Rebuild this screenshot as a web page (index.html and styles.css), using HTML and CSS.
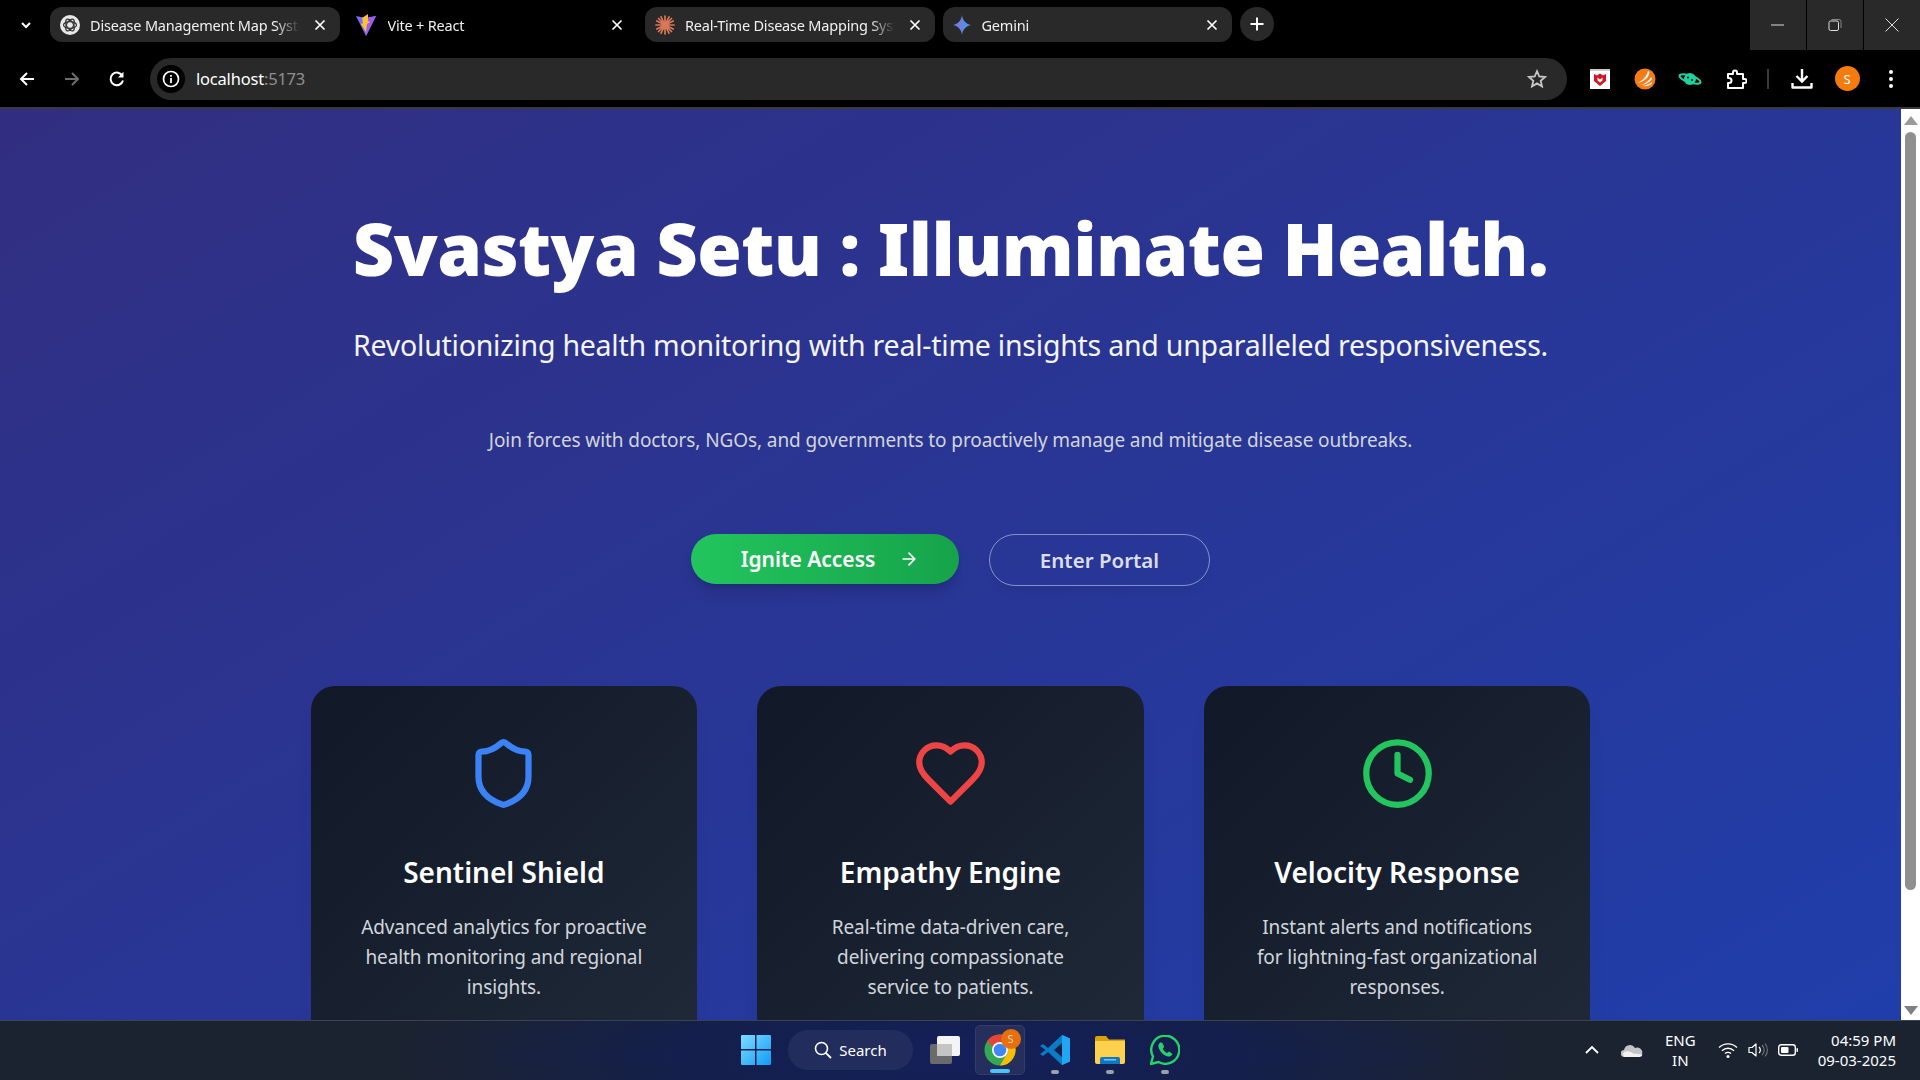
FILE: index.html
```html
<!DOCTYPE html>
<html lang="en">
<head>
<meta charset="utf-8">
<title>Svastya Setu</title>
<link rel="stylesheet" href="styles.css">
</head>
<body>
<header class="chrome">
  <div class="tabstrip">
    <div class="tabs">
      <span class="tab-menu"><svg width="14" height="14" viewBox="0 0 14 14"><path d="M3 5l4 4 4-4" fill="none" stroke="#fff" stroke-width="2"/></svg></span>
      <div class="tab tab-on">
        <svg class="fav" width="20" height="20" viewBox="0 0 20 20"><circle cx="10" cy="10" r="10" fill="#e8e8e8"/><g fill="none" stroke="#333" stroke-width="1.2"><ellipse cx="10" cy="10" rx="6.5" ry="3.4"/><ellipse cx="10" cy="10" rx="6.5" ry="3.4" transform="rotate(60 10 10)"/><ellipse cx="10" cy="10" rx="6.5" ry="3.4" transform="rotate(120 10 10)"/></g></svg>
        <span class="tab-title">Disease Management Map System</span>
        <svg class="tab-x" width="12" height="12" viewBox="0 0 12 12"><path d="M1.5 1.5l9 9M10.5 1.5l-9 9" stroke="#fff" stroke-width="1.7"/></svg>
      </div>
      <div class="tab">
        <svg class="fav fav-vite" width="20" height="22" viewBox="0 0 20 22"><path d="M0 2l10 2 10-2-10 20z" fill="#7b6cf5"/><path d="M10 4l10-2-10 20z" fill="#a35cf0"/><path d="M12 0L6 4l1 5-2 1 5 8 1-8 3-2-2-1z" fill="#fdc22c"/></svg>
        <span class="tab-title">Vite + React</span>
        <svg class="tab-x" width="12" height="12" viewBox="0 0 12 12"><path d="M1.5 1.5l9 9M10.5 1.5l-9 9" stroke="#fff" stroke-width="1.7"/></svg>
      </div>
      <div class="tab tab-on">
        <svg class="fav" width="20" height="20" viewBox="0 0 20 20"><g stroke="#d97757" stroke-width="1.7" stroke-linecap="round"><path d="M10 1v18M1 10h18M3.5 3.5l13 13M16.500 3.500l-13 13M6 1.800l8 16.400M14 1.800L6 18.200M1.800 6l16.400 8M18.200 6L1.800 14"/></g><circle cx="10" cy="10" r="3.500" fill="#d97757"/></svg>
        <span class="tab-title">Real-Time Disease Mapping System</span>
        <svg class="tab-x" width="12" height="12" viewBox="0 0 12 12"><path d="M1.5 1.5l9 9M10.5 1.5l-9 9" stroke="#fff" stroke-width="1.7"/></svg>
      </div>
      <div class="tab tab-on">
        <svg class="fav fav-gem" width="18" height="20" viewBox="0 0 18 20"><defs><linearGradient id="gem" x1="0" x2="1" y1="0.500" y2="0.500"><stop offset="0" stop-color="#8a6fd8"/><stop offset="1" stop-color="#3f9bf0"/></linearGradient></defs><path d="M9 0c.7 5.300 3.700 9 9 10-5.300 1-8.300 4.700-9 10-.7-5.300-3.700-9-9-10 5.300-1 8.300-4.700 9-10z" fill="url(#gem)"/></svg>
        <span class="tab-title">Gemini</span>
        <svg class="tab-x" width="12" height="12" viewBox="0 0 12 12"><path d="M1.5 1.5l9 9M10.5 1.5l-9 9" stroke="#fff" stroke-width="1.7"/></svg>
      </div>
      <span class="tab-new"><svg width="16" height="16" viewBox="0 0 16 16"><path d="M8 1.500v13M1.500 8h13" stroke="#fff" stroke-width="2"/></svg></span>
    </div>
    <div class="winbtns">
      <span class="winbtn"><svg width="14" height="14" viewBox="0 0 14 14"><path d="M0 7h13" stroke="#ddd" stroke-width="1"/></svg></span>
      <span class="winbtn"><svg width="14" height="14" viewBox="0 0 14 14"><rect x="1" y="3" width="9.500" height="9.500" rx="1.500" fill="none" stroke="#ddd"/><path d="M3.500 1.500h7.500a2 2 0 0 1 2 2V10" fill="none" stroke="#888"/></svg></span>
      <span class="winbtn"><svg width="14" height="14" viewBox="0 0 14 14"><path d="M.5.500l13 13M13.500.500l-13 13" stroke="#ddd"/></svg></span>
    </div>
  </div>
  <div class="toolbar">
    <div class="navs">
      <svg width="18" height="18" viewBox="0 0 18 18"><path d="M16 9H3M9 3L3 9l6 6" fill="none" stroke="#fff" stroke-width="2"/></svg>
      <svg width="18" height="18" viewBox="0 0 18 18"><path d="M2 9h13M9 3l6 6-6 6" fill="none" stroke="#6e6e6e" stroke-width="2"/></svg>
      <svg width="18" height="18" viewBox="0 0 18 18"><path d="M14.500 6A6.300 6.300 0 1 0 15 10.500" fill="none" stroke="#fff" stroke-width="2"/><path d="M15.500 1.800v5.700H10z" fill="#fff"/></svg>
    </div>
    <div class="omnibox">
      <span class="site-info"><svg width="18" height="18" viewBox="0 0 18 18"><circle cx="9" cy="9" r="7.500" fill="none" stroke="#fff" stroke-width="1.700"/><path d="M9 8v5M9 5v1.800" stroke="#fff" stroke-width="1.800"/></svg></span>
      <span class="url">localhost<span class="url-port">:5173</span></span>
      <svg class="star" width="20" height="20" viewBox="0 0 20 20"><path d="M10 2.200l2.300 5.300 5.700.5-4.300 3.800 1.300 5.600L10 14.400l-5 3 1.300-5.600L2 8l5.700-.5z" fill="none" stroke="#c8c8c8" stroke-width="1.800"/></svg>
    </div>
    <div class="exts">
      <svg width="22" height="22" viewBox="0 0 22 22"><rect x="1" y="1" width="20" height="20" fill="#fff"/><rect x="1" y="1" width="20" height="2" fill="#ccc"/><path d="M5 6l3 1.500L11 5.500l3 2 3-1.500v7l-6 5-6-5zM8.500 9.500v3l2.500 2 2.500-2v-3L11 11.500z" fill="#d0142c"/></svg>
      <svg width="22" height="22" viewBox="0 0 22 22"><circle cx="11" cy="11" r="10.500" fill="#f47b16"/><path d="M4 15C9 12 13 8 14 3l1.500 1C15 9 11 13 4 15zM6 17c5-1 9-4 11-8l1 2c-2 3-7 6-12 6zM9 18c3-.5 6-2 9-4l-.5 2c-2 1.500-5 2.500-8.500 2z" fill="#fff"/></svg>
      <svg width="24" height="22" viewBox="0 0 24 22"><ellipse cx="12" cy="11" rx="11" ry="3.500" transform="rotate(18 12 11)" fill="none" stroke="#1fd3a0" stroke-width="2"/><circle cx="12" cy="11" r="6" fill="#1fd3a0"/><circle cx="10" cy="9.500" r="1" fill="#000"/><circle cx="14" cy="12" r="1" fill="#000"/></svg>
      <svg width="22" height="22" viewBox="0 0 22 22"><path d="M3 6h5V4.500a2 2 0 0 1 4 0V6h6v5h1.500a2 2 0 0 1 0 4H18v5H3v-5h1a2.500 2.500 0 0 0 0-5H3z" fill="none" stroke="#fff" stroke-width="2" stroke-linejoin="round"/></svg>
    </div>
    <span class="sep"></span>
    <div class="exts-end">
      <svg width="22" height="22" viewBox="0 0 22 22"><path d="M11 1v12M5.500 8l5.500 5.500L16.500 8" fill="none" stroke="#fff" stroke-width="2.400"/><path d="M1.500 15v4.500h19V15" fill="none" stroke="#fff" stroke-width="2.400" stroke-linejoin="round"/></svg>
      <span class="avatar">S</span>
      <svg class="kebab" width="6" height="20" viewBox="0 0 6 20"><circle cx="3" cy="3" r="2" fill="#fff"/><circle cx="3" cy="10" r="2" fill="#fff"/><circle cx="3" cy="17" r="2" fill="#fff"/></svg>
    </div>
  </div>
</header>

<div class="viewport">
  <main class="page">
    <section class="hero">
      <h1 class="hero-title">Svastya Setu : Illuminate Health.</h1>
      <p class="hero-sub">Revolutionizing health monitoring with real-time insights and unparalleled responsiveness.</p>
      <p class="hero-note">Join forces with doctors, NGOs, and governments to proactively manage and mitigate disease outbreaks.</p>
      <div class="cta">
        <a class="btn btn-primary">Ignite Access
          <svg width="20" height="20" viewBox="0 0 24 24" fill="none" stroke="currentColor" stroke-width="2" stroke-linecap="round" stroke-linejoin="round"><path d="M5 12h14M12 5l7 7-7 7"/></svg>
        </a>
        <a class="btn btn-ghost">Enter Portal</a>
      </div>
    </section>
    <section class="cards">
      <article class="card">
        <svg class="card-icon" viewBox="0 0 24 24" fill="none" stroke="#3b82f6" stroke-width="2" stroke-linecap="round" stroke-linejoin="round"><path d="M20 13c0 5-3.500 7.500-7.660 8.950a1 1 0 0 1-.67-.01C7.500 20.500 4 18 4 13V6a1 1 0 0 1 1-1c2 0 4.500-1.200 6.240-2.720a1.170 1.170 0 0 1 1.520 0C14.510 3.810 17 5 19 5a1 1 0 0 1 1 1z"/></svg>
        <h3 class="card-title">Sentinel Shield</h3>
        <p class="card-text">Advanced analytics for proactive health monitoring and regional insights.</p>
      </article>
      <article class="card">
        <svg class="card-icon" viewBox="0 0 24 24" fill="none" stroke="#ef4444" stroke-width="2" stroke-linecap="round" stroke-linejoin="round"><path d="M19 14c1.490-1.460 3-3.210 3-5.500A5.500 5.500 0 0 0 16.500 3c-1.760 0-3 .5-4.500 2-1.500-1.500-2.740-2-4.500-2A5.500 5.500 0 0 0 2 8.500c0 2.300 1.500 4.050 3 5.500l7 7Z"/></svg>
        <h3 class="card-title">Empathy Engine</h3>
        <p class="card-text">Real-time data-driven care, delivering compassionate service to patients.</p>
      </article>
      <article class="card">
        <svg class="card-icon" viewBox="0 0 24 24" fill="none" stroke="#22c55e" stroke-width="2" stroke-linecap="round" stroke-linejoin="round"><circle cx="12" cy="12" r="10"/><path d="M12 6v6l4 2"/></svg>
        <h3 class="card-title">Velocity Response</h3>
        <p class="card-text">Instant alerts and notifications for lightning-fast organizational responses.</p>
      </article>
    </section>
  </main>
  <aside class="scrollbar">
    <span class="sb-arrow"><svg width="14" height="9" viewBox="0 0 14 9"><path d="M7 0l7 9H0z" fill="#9a9a9a"/></svg></span>
    <span class="sb-thumb"></span>
    <span class="sb-arrow"><svg width="14" height="9" viewBox="0 0 14 9"><path d="M0 0h14L7 9z" fill="#808080"/></svg></span>
  </aside>
</div>

<footer class="taskbar">
  <div class="tb-side"></div>
  <div class="tb-center">
    <svg width="30" height="30" viewBox="0 0 30 30"><defs><linearGradient id="win" x1="0" y1="0" x2="1" y2="1"><stop offset="0" stop-color="#7fdcff"/><stop offset="1" stop-color="#109bf5"/></linearGradient></defs><path d="M0 1a1 1 0 0 1 1-1h13v14H0zM15.500 0H29a1 1 0 0 1 1 1v13H15.500zM0 15.500h14V30H1a1 1 0 0 1-1-1zM15.500 15.500H30V29a1 1 0 0 1-1 1H15.500z" fill="url(#win)"/></svg>
    <div class="tb-search">
      <svg width="18" height="18" viewBox="0 0 18 18"><circle cx="7.500" cy="7.500" r="6" fill="none" stroke="#fff" stroke-width="1.600"/><path d="M11.800 11.800l5.200 5.200" stroke="#fff" stroke-width="1.800"/></svg>
      Search
    </div>
    <span class="tb-app"><svg width="30" height="28" viewBox="0 0 30 28"><rect x="0" y="8" width="22" height="20" rx="2" fill="#6b6b6b"/><rect x="7" y="0" width="23" height="20" rx="2" fill="#f4f4f4"/><rect x="7" y="8" width="15" height="12" fill="#c4c4c4"/></svg></span>
    <span class="tb-app tb-active">
      <svg width="32" height="32" viewBox="0 0 32 32"><circle cx="16" cy="16" r="15.500" fill="#34a853"/><path d="M16 .5A15.500 15.500 0 0 1 29.400 8.200H16a8 8 0 0 0-7.300 4.700L3.300 6.800A15.500 15.500 0 0 1 16 .5z" fill="#ea4335"/><path d="M29.400 8.200A15.500 15.500 0 0 1 16 31.500l6.800-11.500A8 8 0 0 0 22 10z" fill="#fbbc05"/><circle cx="16" cy="16" r="8" fill="#fff"/><circle cx="16" cy="16" r="6.300" fill="#4285f4"/></svg>
      <span class="tb-badge">S</span>
      <span class="tb-mark tb-mark-on"></span>
    </span>
    <span class="tb-app">
      <svg width="30" height="30" viewBox="0 0 30 30"><path d="M22 0l8 3.500v23L22 30 8 17l-5 4-3-2 5.500-4L0 11l3-2 5 4z" fill="#0b7cc6"/><path d="M22 0l8 3.500v23L22 30z" fill="#22a6f2"/><path d="M22 8l-8 7 8 7z" fill="#141f4c"/></svg>
      <span class="tb-mark"></span>
    </span>
    <span class="tb-app">
      <svg width="30" height="28" viewBox="0 0 30 28"><path d="M0 2a2 2 0 0 1 2-2h9l3 3.500h16V8H0z" fill="#dca20c"/><path d="M0 5h30v21a2 2 0 0 1-2 2H2a2 2 0 0 1-2-2z" fill="#fdd14d"/><path d="M5 28v-5a2 2 0 0 1 2-2h16a2 2 0 0 1 2 2v5z" fill="#0f78c4"/><rect x="9" y="23" width="12" height="1.500" fill="#7cc4f0"/></svg>
      <span class="tb-mark"></span>
    </span>
    <span class="tb-app">
      <svg width="30" height="30" viewBox="0 0 30 30"><path d="M1 29l2-7.500A14 14 0 1 1 8.500 27z" fill="none" stroke="#25d366" stroke-width="2.400" stroke-linejoin="round"/><path d="M10.500 7.500c-1.500.8-2.500 2.500-2 4.500 1.200 4.500 5 8.500 9.500 9.500 2 .4 3.800-.8 4.500-2.500l-3.500-2.500-2 1.500c-1.800-.8-3.500-2.500-4.300-4.300l1.500-2-2-4z" fill="#25d366"/></svg>
      <span class="tb-mark"></span>
    </span>
  </div>
  <div class="tb-side tb-tray">
    <svg width="14" height="9" viewBox="0 0 14 9"><path d="M1 8l6-6 6 6" fill="none" stroke="#fff" stroke-width="1.800"/></svg>
    <svg class="tray-cloud" width="22" height="14" viewBox="0 0 22 14"><path d="M3.500 14a3.500 3.500 0 0 1-.5-7 6 6 0 0 1 11-2 4.500 4.500 0 0 1 4.500 9z" fill="#c4c4c4"/><path d="M3.500 14a3 3 0 0 1 1-5.500c3-1 6 1 8 2l9 1a3 3 0 0 1-3 2.500z" fill="#f2f2f2"/></svg>
    <div class="tray-lang">ENG<br>IN</div>
    <div class="tray-icons">
      <svg width="20" height="16" viewBox="0 0 20 16"><path d="M1 5.500a13 13 0 0 1 18 0M4 8.700a8.500 8.500 0 0 1 12 0M7 11.600a4.200 4.200 0 0 1 6 0" fill="none" stroke="#fff" stroke-width="1.400"/><circle cx="10" cy="14.500" r="1.500" fill="#fff"/></svg>
      <svg width="20" height="16" viewBox="0 0 20 16"><path d="M1 5.500h3L8 2v12l-4-3.500H1z" fill="none" stroke="#fff" stroke-width="1.200" stroke-linejoin="round"/><path d="M11 5a4 4 0 0 1 0 6" fill="none" stroke="#fff" stroke-width="1.200"/><path d="M14 3a7 7 0 0 1 0 10M17 1.500a10 10 0 0 1 0 13" fill="none" stroke="#777" stroke-width="1.100"/></svg>
      <svg width="20" height="12" viewBox="0 0 20 12"><rect x=".7" y=".7" width="16.600" height="10.600" rx="2.500" fill="none" stroke="#fff" stroke-width="1.400"/><rect x="3" y="3" width="7.500" height="6" rx="1" fill="#fff"/><rect x="18.500" y="4" width="1.500" height="4" rx=".7" fill="#fff"/></svg>
    </div>
    <div class="tray-clock">04:59 PM<br>09-03-2025</div>
  </div>
</footer>
</body>
</html>
```

FILE: styles.css
```css
* { box-sizing: border-box; }
html, body { margin: 0; height: 100%; }
body {
  display: flex;
  flex-direction: column;
  height: 100vh;
  overflow: hidden;
  font-family: "Noto Sans", "Open Sans", sans-serif;
  background: #000;
  color: #fff;
}

/* browser chrome */
.chrome { background: #000; flex: none; border-bottom: 2px solid #3a3a3a; }
.tabstrip { display: flex; height: 50px; justify-content: space-between; }
.tabs { display: flex; align-items: flex-start; padding-top: 7px; gap: 8px; }
.tab-menu { width: 33px; height: 35px; margin-left: 9px; display: flex; align-items: center; justify-content: center; }
.tab {
  width: 289.5px;
  height: 35px;
  display: flex;
  align-items: center;
  padding: 0 14px 0 10px;
  border-radius: 12px;
  font-size: 14.5px;
  color: #f0f0f0;
}
.tab-on { background: #292929; }
.fav { flex: none; margin-right: 10px; }
.fav-vite { margin-left: -2px; margin-right: 12px; }
.fav-gem { margin-right: 11px; }
.tab-title {
  flex: 1;
  overflow: hidden;
  white-space: nowrap;
  letter-spacing: -.2px;
  -webkit-mask-image: linear-gradient(to right, #000 88%, transparent 100%);
  mask-image: linear-gradient(to right, #000 88%, transparent 100%);
}
.tab-x { flex: none; margin-left: 14px; }
.tab-new { width: 34px; height: 34px; border-radius: 50%; background: #292929; display: flex; align-items: center; justify-content: center; }
.winbtns { display: flex; gap: 1px; }
.winbtn { width: 56px; height: 50px; background: #292929; display: flex; align-items: center; justify-content: center; }

.toolbar { height: 57px; display: flex; align-items: center; padding: 0 19px 0 18px; }
.navs { display: flex; gap: 27px; align-items: center; }
.omnibox {
  width: 1417px;
  height: 42px;
  margin-left: 24px;
  border-radius: 21px;
  background: #292929;
  display: flex;
  align-items: center;
  padding: 0 20px 0 7px;
}
.site-info { width: 28px; height: 28px; background: #000; border-radius: 50%; display: flex; align-items: center; justify-content: center; }
.url { flex: 1; margin-left: 11px; font-size: 16.5px; letter-spacing: -.2px; color: #fff; }
.url-port { color: #8f8f8f; }
.exts { display: flex; gap: 22.5px; align-items: center; margin-left: 22px; }
.sep { width: 2px; height: 20px; background: #3a3a3a; margin: 0 22px 0 20px; }
.exts-end { display: flex; align-items: center; gap: 22px; }
.avatar { width: 25px; height: 25px; border-radius: 50%; background: #f47b0c; font-size: 13px; display: flex; align-items: center; justify-content: center; }
.kebab { margin-left: 6px; }

/* page */
.viewport { flex: 1; min-height: 0; display: flex; overflow: hidden; }
.page {
  flex: 1;
  min-width: 0;
  height: 1160px;
  background: linear-gradient(to bottom right, #312e81, #1e40af);
  display: flex;
  flex-direction: column;
  align-items: center;
  padding-top: 103px;
}
.hero { display: flex; flex-direction: column; align-items: center; text-align: center; }
.hero-title { margin: 0; font-size: 72px; line-height: 72px; font-weight: 900; letter-spacing: -.6px; color: #fff; white-space: nowrap; }
.hero-sub { margin: 43px 0 0; font-size: 28.5px; line-height: 36px; letter-spacing: -.23px; color: #f3f4f6; white-space: nowrap; }
.hero-note { margin: 63px 0 0; font-size: 19px; line-height: 28px; letter-spacing: -.09px; color: #d1d5db; white-space: nowrap; }
.cta { display: flex; gap: 30px; margin-top: 80px; align-items: flex-start; }
.btn { display: flex; align-items: center; justify-content: center; border-radius: 26px; font-weight: 600; }
.btn-primary {
  width: 268px;
  height: 50px;
  padding-left: 10px;
  gap: 24px;
  font-size: 21px;
  color: #fff;
  background: linear-gradient(to right, #22c55e, #16a34a);
  box-shadow: 0 10px 15px -3px rgba(0, 0, 0, .15), 0 4px 6px -4px rgba(0, 0, 0, .15);
}
.btn-ghost {
  width: 221px;
  height: 52px;
  font-size: 20.5px;
  color: #dbdeea;
  border: 1.500px solid rgba(255, 255, 255, .45);
  box-shadow: 0 8px 12px -4px rgba(0, 0, 0, .08);
}
.cards { display: grid; grid-template-columns: repeat(3, 386.67px); gap: 60px; margin-top: 100px; }
.card {
  border-radius: 24px;
  padding: 50px 50px 48px;
  text-align: center;
  background: linear-gradient(to bottom right, #111827, #1f2937);
  box-shadow: 0 20px 25px -5px rgba(0, 0, 0, .05);
}
.card-icon { display: block; width: 75px; height: 75px; margin: 0 auto; }
.card-title { margin: 43px 0 0; font-size: 28px; line-height: 36px; font-weight: 600; color: #fff; }
.card-text { margin: 22px 0 0; font-size: 19px; line-height: 30px; letter-spacing: -.09px; color: #d1d5db; }

/* scrollbar */
.scrollbar { flex: none; width: 19px; padding-top: 2px; background: #fff; display: flex; flex-direction: column; align-items: center; }
.sb-arrow { height: 19px; flex: none; display: flex; align-items: center; justify-content: center; }
.sb-thumb { width: 11px; height: 758px; margin: 2px 0 auto; border-radius: 6px; background: #8f8f8f; }

/* taskbar */
.taskbar {
  flex: none;
  height: 60px;
  padding-bottom: 2px;
  display: grid;
  grid-template-columns: 1fr auto 1fr;
  align-items: center;
  border-top: 1px solid #3b4252;
  background: radial-gradient(ellipse 560px 120px at 50% 60%, #14205a 0%, #141f4c 50%, #1b2331 100%);
}
.tb-center { display: flex; align-items: center; padding-left: 13px; }
.tb-search {
  width: 125px;
  height: 40px;
  margin: 0 4px 0 17px;
  border-radius: 20px;
  background: #222d5e;
  font-size: 15px;
  display: flex;
  align-items: center;
  justify-content: center;
  gap: 7px;
}
.tb-app { position: relative; width: 50px; height: 50px; margin: 0 2.500px; display: flex; align-items: center; justify-content: center; border-radius: 5px; }
.tb-active { background: #262f5c; border: 1px solid #343c68; }
.tb-badge { position: absolute; top: 3px; right: 3px; width: 20px; height: 20px; border-radius: 50%; background: #e8700c; color: #ffd9b8; font-size: 11px; display: flex; align-items: center; justify-content: center; }
.tb-mark { position: absolute; bottom: 1px; left: 50%; transform: translateX(-50%); width: 8px; height: 4px; border-radius: 2px; background: #9aa0ac; }
.tb-mark-on { width: 20px; background: #4cc2ff; }
.tb-tray { display: flex; align-items: center; justify-content: flex-end; padding-right: 24px; font-size: 15px; line-height: 20px; }
.tray-cloud { margin-left: 22px; }
.tray-lang { text-align: center; margin-left: 22px; }
.tray-icons { display: flex; align-items: center; gap: 10px; margin-left: 22px; }
.tray-clock { text-align: right; margin-left: 20px; }
```
